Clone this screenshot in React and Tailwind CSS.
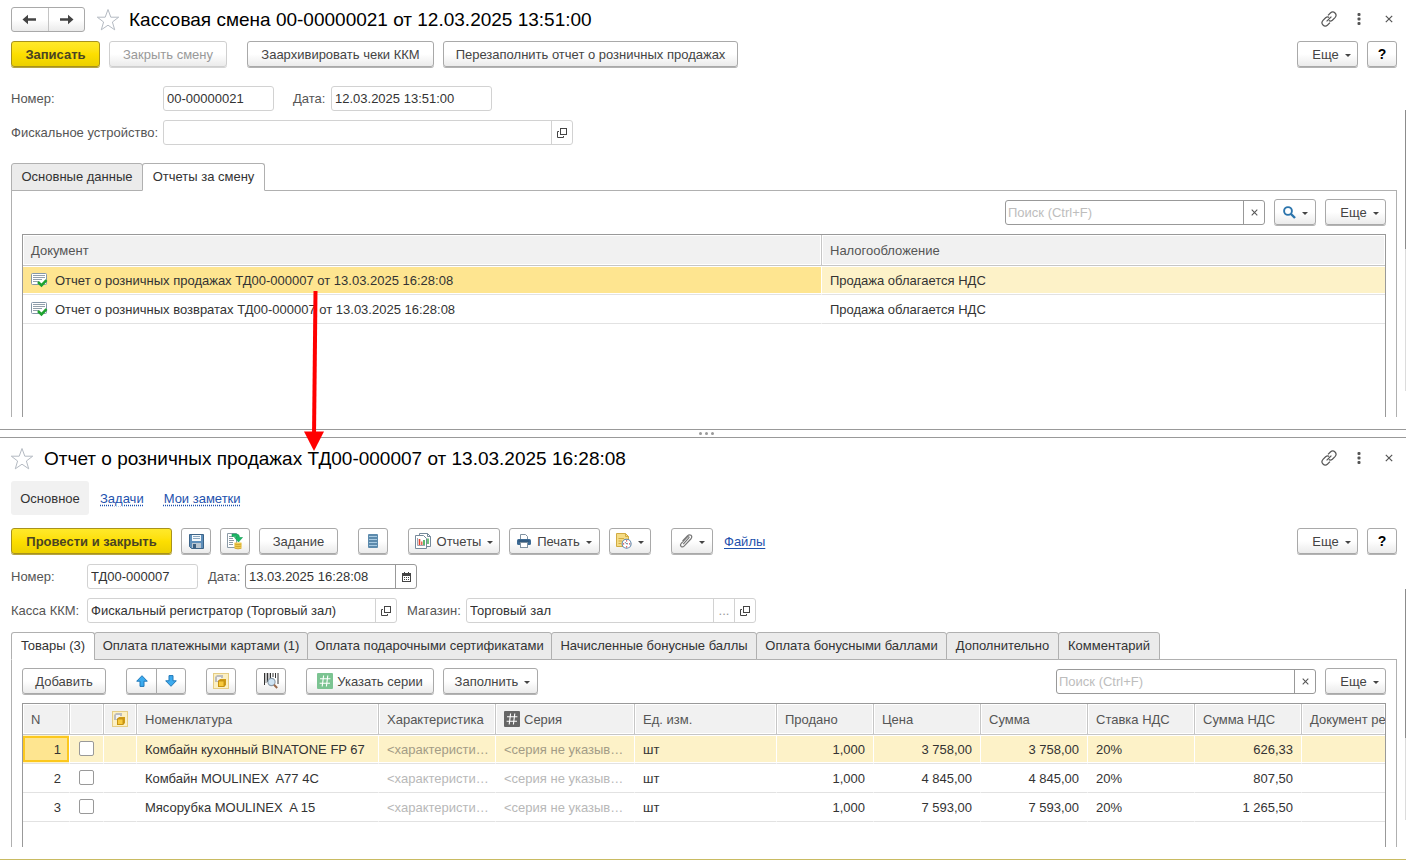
import clsx from "clsx";

/* ---------- icons ---------- */

const ArrowIcon = ({ flip }) => (
  <svg width="15" height="11" viewBox="0 0 15 11" className={clsx(flip && "rotate-180")}>
    <path d="M0.5 5.5L6 0.8V4.2H14V6.8H6V10.2Z" fill="#444" />
  </svg>
);

const StarIcon = () => (
  <svg width="24" height="24" viewBox="0 0 24 24" className="shrink-0">
    <path
      d="M12 1.5L14.8 9.2H22.7L16.4 14L18.7 21.8L12 17.2L5.3 21.8L7.6 14L1.3 9.2H9.2Z"
      fill="#fff"
      stroke="#b4bac2"
      strokeWidth="1"
    />
  </svg>
);

const LinkIcon = () => (
  <svg width="16" height="16" viewBox="0 0 16 16" fill="none" stroke="#555" strokeWidth="1.2">
    <path d="M7 4.4L9.4 2Q11.8 -0.2 14 2Q16.2 4.2 14 6.6L11.4 9.2Q9.6 10.6 7.8 9.6" />
    <path d="M9 11.6L6.6 14Q4.2 16.2 2 14Q-0.2 11.8 2 9.4L4.6 6.8Q6.4 5.4 8.2 6.4" />
    <path d="M5.6 10.4L10.4 5.6" />
  </svg>
);

const DotsIcon = () => (
  <svg width="4" height="12" viewBox="0 0 4 12" fill="#555">
    <rect x="0.5" y="0" width="3" height="3" rx="1" />
    <rect x="0.5" y="4.5" width="3" height="3" rx="1" />
    <rect x="0.5" y="9" width="3" height="3" rx="1" />
  </svg>
);

const CrossIcon = ({ size = 8 }) => (
  <svg width={size} height={size} viewBox="0 0 8 8">
    <path d="M0.8 0.8L7.2 7.2M7.2 0.8L0.8 7.2" stroke="#555" strokeWidth="1.2" />
  </svg>
);

const Caret = () => (
  <svg width="6" height="3" viewBox="0 0 6 3" className="mt-0.5 shrink-0">
    <path d="M0 0H6L3 3Z" fill="#444" />
  </svg>
);

const OpenIcon = () => (
  <svg width="10" height="10" viewBox="0 0 10 10" fill="none" stroke="#444" strokeWidth="1">
    <rect x="3.5" y="0.5" width="6" height="6" />
    <path d="M2 3.5H0.5V9.5H6.5V8" />
  </svg>
);

const CalendarIcon = () => (
  <svg width="9" height="10" viewBox="0 0 9 10">
    <rect x="0.5" y="1.5" width="8" height="8" fill="#fff" stroke="#444" />
    <rect x="0" y="1" width="9" height="3" fill="#444" />
    <path d="M2.5 0V2M6.5 0V2" stroke="#444" />
    <path d="M2 5.5H7.5M2 7.5H7.5" stroke="#444" strokeDasharray="1 1" />
  </svg>
);

const SearchIcon = () => (
  <svg width="13" height="13" viewBox="0 0 13 13" fill="none" stroke="#2b74ac">
    <circle cx="5" cy="5" r="3.9" strokeWidth="1.9" />
    <path d="M8 8L12 12" strokeWidth="2.4" />
  </svg>
);

const DocPostedIcon = () => (
  <svg width="17" height="15" viewBox="0 0 17 15" className="shrink-0">
    <rect x="0.5" y="0.5" width="15" height="11" rx="1" fill="#fff" stroke="#8497a8" />
    <path d="M2 2.5H14M2 4.5H14M2 6.5H11M2 8.5H8" stroke="#93a0ab" />
    <path d="M7 9L10.5 12.5L15.5 7.2" fill="none" stroke="#1fa32f" strokeWidth="2.6" />
  </svg>
);

const SaveIcon = () => (
  <svg width="15" height="15" viewBox="0 0 15 15">
    <path d="M0.5 0.5H14.5V14.5H2.5L0.5 12.5Z" fill="#5e8fbb" stroke="#3d6488" />
    <rect x="3" y="1" width="9" height="6" fill="#f4f8fb" />
    <path d="M4 2.5H11M4 4.5H11" stroke="#8aa7c0" />
    <rect x="3" y="9" width="9" height="5" fill="#b9c6d2" />
    <rect x="4" y="10" width="3" height="4" fill="#3d5f80" />
  </svg>
);

const PostIcon = () => (
  <svg width="16" height="17" viewBox="0 0 16 17">
    <path d="M0.5 0.5H9.5V14.5H0.5Z" fill="#fff" stroke="#8b9aa6" />
    <path d="M2 3.5H6M2 5.5H6M2 7.5H7M2 9.5H6M2 11.5H6" stroke="#8b9aa6" />
    <path d="M5 1H9.5Q12.5 1 12.5 4.5H15.5L11.5 9L7.5 4.5H10Q10 3.5 9 3.5H5Z" fill="#1bb765" stroke="#0f9a50" strokeWidth="0.6" />
    <path d="M7.5 9.5H14.5V15Q11 17 7.5 15Z" fill="#f2cf52" />
    <path d="M7.5 11Q11 12.4 14.5 11M7.5 13Q11 14.4 14.5 13M7.5 15.2Q11 16.6 14.5 15.2" fill="none" stroke="#c99a22" strokeWidth="0.8" />
  </svg>
);

const StackIcon = () => (
  <svg width="10" height="14" viewBox="0 0 10 14">
    <rect x="0" y="0" width="10" height="14" rx="1" fill="#5d8bad" />
    <path d="M1 2.5H9M1 5.5H9M1 8.5H9M1 11.5H9" stroke="#a9cbe2" />
  </svg>
);

const ReportsIcon = () => (
  <svg width="16" height="16" viewBox="0 0 16 16">
    <path d="M4.5 0.5H12.5L15.5 3.5V13.5H4.5Z" fill="#fff" stroke="#75899a" />
    <path d="M12.5 0.5V3.5H15.5" fill="none" stroke="#75899a" />
    <path d="M13 5.5V11" stroke="#35a84a" strokeWidth="1.4" />
    <path d="M0.5 2.5H8.5L11.5 5.5V15.5H0.5Z" fill="#fff" stroke="#75899a" />
    <path d="M2.5 5V12.5H10" fill="none" stroke="#9aa8b4" />
    <path d="M4.5 6V12" stroke="#e2442f" strokeWidth="1.6" />
    <path d="M6.8 8.5V12" stroke="#e2442f" strokeWidth="1.2" />
    <path d="M9 7V12" stroke="#35a84a" strokeWidth="1.6" />
  </svg>
);

const PrintIcon = () => (
  <svg width="14" height="14" viewBox="0 0 14 14">
    <path d="M3.5 5V0.5H8.5L10.5 2.5V5" fill="#fff" stroke="#8091a0" />
    <rect x="0" y="5" width="14" height="6" rx="1.5" fill="#3e6b95" />
    <path d="M1.5 7H12.5" stroke="#274a6b" />
    <rect x="3.5" y="8.5" width="7" height="5" fill="#fff" stroke="#8091a0" />
  </svg>
);

const NoteClockIcon = () => (
  <svg width="16" height="16" viewBox="0 0 16 16">
    <path d="M0.5 0.5H9.5L12.5 3.5V13.5H0.5Z" fill="#f5dc85" stroke="#d1ab43" />
    <path d="M9.5 0.5V3.5H12.5M2.5 5.5H8M2.5 8H6M2.5 10.5H5" fill="none" stroke="#d1ab43" />
    <circle cx="10.6" cy="10.8" r="4.5" fill="#fff" stroke="#5f87ab" strokeWidth="1.1" />
    <path d="M10.6 7.2V8.4M10.6 13.2V14.4M7 10.8H8.2M13 10.8H14.2" stroke="#e04040" strokeWidth="1.2" />
    <path d="M10.6 10.8L9 9.2M10.6 10.8H12" stroke="#3d5f80" strokeWidth="0.9" />
  </svg>
);

const ClipIcon = () => (
  <svg width="14" height="14" viewBox="0 0 14 14" fill="none" stroke="#777" strokeWidth="1.2">
    <path d="M4.2 10.2L9.6 4.2Q10.6 3.2 9.7 2.7Q9 2.2 8.2 3L2.3 9.3Q0.7 11.2 2.2 12.5Q3.6 13.6 5.3 11.9L11.8 5Q13.6 2.8 12 1.3Q10.3 0 8.4 1.9L3.6 7" />
  </svg>
);

const UpIcon = ({ down }) => (
  <svg width="12" height="12" viewBox="0 0 12 12" className={clsx(down && "rotate-180")}>
    <path d="M6 0.7L11.3 6.2H8V11.4H4V6.2H0.7Z" fill="#3cabef" stroke="#2279b8" strokeWidth="1" />
  </svg>
);

const BoxesIcon = () => (
  <svg width="16" height="16" viewBox="0 0 16 16" className="shrink-0">
    <rect x="0.5" y="0.5" width="15" height="15" fill="#fcf0c3" stroke="#e5cd85" />
    <path d="M2 4L4 2H10V5H5V9H2Z" fill="#bdbdbd" />
    <rect x="4" y="4" width="4" height="4" fill="#f3f3f3" />
    <path d="M5 8L7 6H13V12L11 14H5Z" fill="#cf9a16" />
    <rect x="5.5" y="8" width="5.5" height="5.5" fill="#f8ca3d" stroke="#bf8c10" strokeWidth="0.8" />
  </svg>
);

const BarcodeIcon = () => (
  <svg width="15" height="16" viewBox="0 0 15 16">
    <path d="M0.5 0V12M3.5 0V9M6.5 0V5M9 0V4M11.5 0V5M14 0V11" stroke="#333" strokeWidth="1" />
    <path d="M2 0V10M5 0V6" stroke="#333" strokeWidth="0.6" />
    <circle cx="7.5" cy="9" r="3.6" fill="#cfe4f4" stroke="#8a9aa8" strokeWidth="1.1" />
    <path d="M10 11.8L13.2 15" stroke="#9a6a4c" strokeWidth="2" />
  </svg>
);

const HashIcon = ({ className }) => (
  <svg width="16" height="16" viewBox="0 0 16 16" className={clsx("shrink-0", className)}>
    <rect width="16" height="16" rx="1" fill="currentColor" />
    <path d="M6.6 2.5L5.2 13.5M10.8 2.5L9.4 13.5M3 5.8H13.4M2.6 10.2H13" stroke="#fff" strokeWidth="1.1" />
  </svg>
);

/* ---------- controls ---------- */

const Button = ({ children, primary, disabled, caret, className, label }) => (
  <button
    type="button"
    disabled={disabled}
    aria-label={label}
    className={clsx(
      "flex h-[26px] shrink-0 items-center justify-center whitespace-nowrap rounded-[3px] border bg-linear-to-b",
      primary
        ? "border-[#a8921c] from-[#ffe929] via-[#fddf00] to-[#ecd000] font-bold text-[#4a4423] shadow-[0_1px_0_#b5a440]"
        : "from-white from-50% to-[#ebebeb]",
      !primary && !disabled && "border-[#a9a9a9] shadow-[0_1px_0_#b3b3b3]",
      disabled && "border-[#cfcfcf] text-[#999] shadow-[0_1px_0_#d5d5d5]",
      caret ? "gap-1.5" : "gap-1",
      className
    )}
  >
    {children}
    {caret && <Caret />}
  </button>
);

const MoreButton = () => (
  <Button caret className="w-[61px] pl-2 text-[#444]">Еще</Button>
);

const HelpButton = () => (
  <Button className="w-[30px] text-sm font-bold text-black">?</Button>
);

const Label = ({ htmlFor, className, children }) => (
  <label htmlFor={htmlFor} className={clsx("whitespace-nowrap text-[#555]", className)}>
    {children}
  </label>
);

const Field = ({ id, value, width, strong, children }) => (
  <div
    className={clsx(
      "flex h-[25px] items-stretch overflow-hidden rounded-[3px] border bg-white",
      strong ? "divide-x divide-[#999] border-[#999]" : "divide-x divide-[#d2d2d2] border-[#d2d2d2]",
      width
    )}
  >
    <input id={id} defaultValue={value} className="w-0 min-w-0 flex-1 px-[3px] text-[#333] outline-none" />
    {children}
  </div>
);

const FieldButton = ({ label, children }) => (
  <button type="button" aria-label={label} className="box-content flex w-5 shrink-0 items-center justify-center text-[#999]">
    {children}
  </button>
);

const SearchBox = ({ id }) => (
  <div className="flex h-[25px] w-[260px] divide-x divide-[#999] rounded-[3px] border border-[#999] bg-white">
    <input
      id={id}
      aria-label="Поиск"
      placeholder="Поиск (Ctrl+F)"
      className="w-0 min-w-0 flex-1 px-[2px] outline-none placeholder:text-[#bdbdbd]"
    />
    <FieldButton label="Очистить">
      <CrossIcon size={7} />
    </FieldButton>
  </div>
);

const WindowActions = () => (
  <div className="ml-auto flex items-center pb-0.5">
    <button type="button" aria-label="Ссылка" className="mr-[20px]">
      <LinkIcon />
    </button>
    <button type="button" aria-label="Меню" className="mr-[24px]">
      <DotsIcon />
    </button>
    <button type="button" aria-label="Закрыть" className="mr-1">
      <CrossIcon />
    </button>
  </div>
);

const Tabs = ({ items, active }) => (
  <div role="tablist" className="relative -mb-px flex">
    {items.map((tab, i) => (
      <button
        key={tab.title}
        type="button"
        role="tab"
        aria-selected={i === active}
        className={clsx(
          "h-7 whitespace-nowrap rounded-t-[3px] border border-[#b0b0b0] pb-px text-center text-[#333]",
          i > 0 && "-ml-px",
          i === active ? "border-b-white bg-white" : "bg-[#ebebeb]",
          tab.width
        )}
      >
        {tab.title}
      </button>
    ))}
  </div>
);

const Scrollbar = ({ className, thumb, track }) => (
  <div className={clsx("w-px shrink-0", className)}>
    <div className={clsx("bg-[#8c8c8c]", thumb)} />
    <div className={clsx("bg-[#dcdcdc]", track)} />
  </div>
);

const thClass =
  "h-[31px] overflow-hidden whitespace-nowrap border-b border-r border-[#c6c6c6] bg-[#f1f1f1] px-2 text-left font-normal text-[#555] shadow-[inset_0_0_0_1px_#fff] last:border-r-0";
const tdClass =
  "h-[29px] overflow-hidden whitespace-nowrap border-b border-r border-b-[#e2e2e2] border-r-white px-2 shadow-[inset_0_1px_#fff,inset_0_-1px_#fff] last:border-r-0";

/* ---------- data ---------- */

const shiftTabs = [
  { title: "Основные данные", width: "w-[132px]" },
  { title: "Отчеты за смену", width: "w-[123px]" },
];

const reports = [
  { doc: "Отчет о розничных продажах ТД00-000007 от 13.03.2025 16:28:08", tax: "Продажа облагается НДС" },
  { doc: "Отчет о розничных возвратах ТД00-000007 от 13.03.2025 16:28:08", tax: "Продажа облагается НДС" },
];

const reportTabs = [
  { title: "Товары (3)", width: "w-[84px]" },
  { title: "Оплата платежными картами (1)", width: "w-[214px]" },
  { title: "Оплата подарочными сертификатами", width: "w-[245px]" },
  { title: "Начисленные бонусные баллы", width: "w-[206px]" },
  { title: "Оплата бонусными баллами", width: "w-[191px]" },
  { title: "Дополнительно", width: "w-[113px]" },
  { title: "Комментарий", width: "w-[102px]" },
];

const goods = [
  { name: "Комбайн кухонный BINATONE FP 67", price: "3 758,00", sum: "3 758,00", vat: "626,33" },
  { name: "Комбайн MOULINEX  A77 4C", price: "4 845,00", sum: "4 845,00", vat: "807,50" },
  { name: "Мясорубка MOULINEX  A 15", price: "7 593,00", sum: "7 593,00", vat: "1 265,50" },
];

/* ---------- panes ---------- */

const ShiftPane = () => (
  <section className="pt-[7px]">
    <header className="flex h-[25px] items-center pl-[11px] pr-[9px]">
      <div className="flex h-[25px] w-[74px] divide-x divide-[#c4c4c4] rounded-[3px] border border-[#a9a9a9] bg-linear-to-b from-white from-50% to-[#ebebeb]">
        <button type="button" aria-label="Назад" className="flex flex-1 items-center justify-center">
          <ArrowIcon />
        </button>
        <button type="button" aria-label="Вперед" className="flex flex-1 items-center justify-center">
          <ArrowIcon flip />
        </button>
      </div>
      <button type="button" aria-label="В избранное" className="ml-[11px] mr-[9px]">
        <StarIcon />
      </button>
      <h1 className="text-[19px] text-black">Кассовая смена 00-00000021 от 12.03.2025 13:51:00</h1>
      <WindowActions />
    </header>

    <div className="mt-[9px] flex pl-[11px] pr-[9px]">
      <Button primary className="w-[89px]">Записать</Button>
      <Button disabled className="ml-[9px] w-[118px]">Закрыть смену</Button>
      <Button className="ml-5 w-[187px] text-[#444]">Заархивировать чеки ККМ</Button>
      <Button className="ml-[9px] w-[295px] text-[#444]">Перезаполнить отчет о розничных продажах</Button>
      <div className="ml-auto flex gap-[9px]">
        <MoreButton />
        <HelpButton />
      </div>
    </div>

    <div className="flex">
      <div className="min-w-0 flex-1 pl-[11px] pr-2 pt-[19px]">
        <div className="flex items-center">
          <Label htmlFor="shift-number" className="w-[152px]">Номер:</Label>
          <Field id="shift-number" value="00-00000021" width="w-[111px]" />
          <Label htmlFor="shift-date" className="ml-[19px] w-[38px]">Дата:</Label>
          <Field id="shift-date" value="12.03.2025 13:51:00" width="w-[161px]" />
        </div>
        <div className="mt-[9px] flex items-center">
          <Label htmlFor="device" className="w-[152px]">Фискальное устройство:</Label>
          <Field id="device" value="" width="w-[410px]">
            <FieldButton label="Открыть"><OpenIcon /></FieldButton>
          </Field>
        </div>

        <div className="mt-[18px]">
          <Tabs items={shiftTabs} active={1} />
          <div className="border border-b-0 border-[#b0b0b0] px-[10px] pt-2">
            <div className="flex items-center justify-end gap-[9px]">
              <SearchBox id="shift-search" />
              <Button caret label="Найти" className="w-[42px]"><SearchIcon /></Button>
              <MoreButton />
            </div>
            <div className="mt-[9px] min-h-[183px] border border-b-0 border-[#999]">
              <table className="w-full table-fixed border-separate border-spacing-0">
                <thead>
                  <tr>
                    <th className={clsx(thClass, "w-[799px]")}>Документ</th>
                    <th className={thClass}>Налогообложение</th>
                  </tr>
                </thead>
                <tbody>
                  {reports.map((r, i) => (
                    <tr key={r.doc}>
                      <td className={clsx(tdClass, i === 0 && "bg-[#fee590]")}>
                        <div className="flex items-center gap-[7px]">
                          <DocPostedIcon />
                          {r.doc}
                        </div>
                      </td>
                      <td className={clsx(tdClass, i === 0 && "bg-[#fdf2c8]")}>{r.tax}</td>
                    </tr>
                  ))}
                </tbody>
              </table>
            </div>
          </div>
        </div>
      </div>
      <Scrollbar className="mt-[43px]" thumb="h-[139px]" track="h-[142px]" />
    </div>
  </section>
);

const GoodsTable = () => (
  <table className="w-full table-fixed border-separate border-spacing-0">
    <thead>
      <tr>
        <th className={clsx(thClass, "w-[47px]")}>N</th>
        <th className={clsx(thClass, "w-[34px]")} />
        <th className={clsx(thClass, "w-[33px]")}><BoxesIcon /></th>
        <th className={clsx(thClass, "w-[242px]")}>Номенклатура</th>
        <th className={clsx(thClass, "w-[117px]")}>Характеристика</th>
        <th className={clsx(thClass, "w-[139px]")}>
          <div className="flex items-center gap-1">
            <HashIcon className="text-[#666]" />
            Серия
          </div>
        </th>
        <th className={clsx(thClass, "w-[142px]")}>Ед. изм.</th>
        <th className={clsx(thClass, "w-[97px]")}>Продано</th>
        <th className={clsx(thClass, "w-[107px]")}>Цена</th>
        <th className={clsx(thClass, "w-[107px]")}>Сумма</th>
        <th className={clsx(thClass, "w-[107px]")}>Ставка НДС</th>
        <th className={clsx(thClass, "w-[107px]")}>Сумма НДС</th>
        <th className={thClass}>Документ ре</th>
      </tr>
    </thead>
    <tbody>
      {goods.map((g, i) => {
        const hint = i === 0 ? "text-[#a39c86]" : "text-[#b8b8b8]";
        return (
          <tr key={g.name} className={clsx(i === 0 && "bg-[#fdf2c8]")}>
            {i === 0 ? (
              <td className="h-[29px] border-b border-r border-b-[#e2e2e2] border-r-white py-px">
                <div className="flex h-[26px] items-center justify-end border-2 border-[#fcc81e] bg-[#fee590] pr-[6px]">1</div>
              </td>
            ) : (
              <td className={clsx(tdClass, "text-right")}>{i + 1}</td>
            )}
            <td className={clsx(tdClass, "pb-0.5")}>
              <input
                type="checkbox"
                aria-label={g.name}
                className="ml-px block size-[15px] appearance-none rounded-[2px] border border-[#999] bg-white"
              />
            </td>
            <td className={tdClass} />
            <td className={clsx(tdClass, "whitespace-pre")}>{g.name}</td>
            <td className={clsx(tdClass, hint)}>&lt;характеристи…</td>
            <td className={clsx(tdClass, hint)}>&lt;серия не указыв…</td>
            <td className={tdClass}>шт</td>
            <td className={clsx(tdClass, "text-right")}>1,000</td>
            <td className={clsx(tdClass, "text-right")}>{g.price}</td>
            <td className={clsx(tdClass, "text-right")}>{g.sum}</td>
            <td className={tdClass}>20%</td>
            <td className={clsx(tdClass, "text-right")}>{g.vat}</td>
            <td className={tdClass} />
          </tr>
        );
      })}
    </tbody>
  </table>
);

const ReportPane = () => (
  <section className="flex flex-1 flex-col pb-3 pt-[8px]">
    <header className="flex h-[25px] items-center pl-[10px] pr-[9px]">
      <button type="button" aria-label="В избранное" className="mr-[10px]">
        <StarIcon />
      </button>
      <h2 className="text-[19px] text-black">Отчет о розничных продажах ТД00-000007 от 13.03.2025 16:28:08</h2>
      <WindowActions />
    </header>

    <nav className="mt-[10px] flex h-[34px] items-center gap-5 pl-[11px]">
      <a href="#main" className="-mr-[9px] flex h-full w-[78px] items-center justify-center rounded-[3px] bg-[#f1f1f1]">
        Основное
      </a>
      <a href="#tasks" className="text-[#1d51ad] underline decoration-dotted underline-offset-2">Задачи</a>
      <a href="#notes" className="text-[#1d51ad] underline decoration-dotted underline-offset-2">Мои заметки</a>
    </nav>

    <div className="mt-[13px] flex items-center pl-[11px] pr-[9px]">
      <Button primary className="w-[161px]">Провести и закрыть</Button>
      <Button label="Записать" className="ml-[9px] w-[30px]"><SaveIcon /></Button>
      <Button label="Провести" className="ml-[9px] w-[30px]"><PostIcon /></Button>
      <Button className="ml-[9px] w-[79px] text-[#444]">Задание</Button>
      <Button label="Движения документа" className="ml-5 w-[30px]"><StackIcon /></Button>
      <Button caret className="ml-5 w-[92px] text-[#444]"><ReportsIcon />Отчеты</Button>
      <Button caret className="ml-[9px] w-[91px] text-[#444]"><PrintIcon />Печать</Button>
      <Button caret label="Напоминание" className="ml-[9px] w-[42px]"><NoteClockIcon /></Button>
      <Button caret label="Вложения" className="ml-5 w-[42px]"><ClipIcon /></Button>
      <a href="#files" className="ml-[11px] text-[#1d51ad] underline underline-offset-2">Файлы</a>
      <div className="ml-auto flex gap-[9px]">
        <MoreButton />
        <HelpButton />
      </div>
    </div>

    <div className="flex flex-1">
      <div className="flex min-w-0 flex-1 flex-col pl-[11px] pr-2 pt-[10px]">
        <div className="flex items-center">
          <Label htmlFor="report-number" className="w-[76px]">Номер:</Label>
          <Field id="report-number" value="ТД00-000007" width="w-[111px]" />
          <Label htmlFor="report-date" className="ml-[10px] w-[37px]">Дата:</Label>
          <Field id="report-date" value="13.03.2025 16:28:08" width="w-[172px]" strong>
            <FieldButton label="Выбрать дату"><CalendarIcon /></FieldButton>
          </Field>
        </div>
        <div className="mt-[9px] flex items-center">
          <Label htmlFor="cashbox" className="w-[76px]">Касса ККМ:</Label>
          <Field id="cashbox" value="Фискальный регистратор (Торговый зал)" width="w-[310px]">
            <FieldButton label="Открыть"><OpenIcon /></FieldButton>
          </Field>
          <Label htmlFor="store" className="ml-[10px] w-[59px]">Магазин:</Label>
          <Field id="store" value="Торговый зал" width="w-[290px]">
            <FieldButton label="Выбрать">...</FieldButton>
            <FieldButton label="Открыть"><OpenIcon /></FieldButton>
          </Field>
        </div>

        <div className="mt-[9px] flex flex-1 flex-col">
          <Tabs items={reportTabs} active={0} />
          <div className="flex flex-1 flex-col border border-b-0 border-[#b0b0b0] px-[10px] pt-2">
            <div className="flex items-center">
              <Button className="w-[84px] text-[#444]">Добавить</Button>
              <div className="ml-5 flex">
                <Button label="Вверх" className="w-[31px] rounded-r-none"><UpIcon /></Button>
                <Button label="Вниз" className="-ml-px w-[30px] rounded-l-none"><UpIcon down /></Button>
              </div>
              <Button label="Упаковки" className="ml-5 w-[30px]"><BoxesIcon /></Button>
              <Button label="Поиск по штрихкоду" className="ml-5 w-[30px]"><BarcodeIcon /></Button>
              <Button className="ml-5 w-[128px] text-[#444]">
                <HashIcon className="text-[#7cc492]" />
                Указать серии
              </Button>
              <Button caret className="ml-[9px] w-[95px] pl-1 text-[#444]">Заполнить</Button>
              <div className="ml-auto flex items-center gap-[9px]">
                <SearchBox id="goods-search" />
                <MoreButton />
              </div>
            </div>
            <div className="mt-[9px] min-h-[144px] flex-1 border border-b-0 border-[#999]">
              <GoodsTable />
            </div>
          </div>
        </div>
      </div>
      <Scrollbar className="mt-[35px]" thumb="h-[149px]" track="h-[82px]" />
    </div>
  </section>
);

export default function App() {
  return (
    <div className="relative flex min-h-screen flex-col border-b border-[#c9bb62] bg-white font-['Liberation_Sans',Arial,sans-serif] text-[13px] leading-[17px] text-[#333]">
      <ShiftPane />

      {/* splitter */}
      <div className="mt-3 flex h-[9px] items-center justify-center gap-[3px] border-y border-[#999] pl-1.5">
        <span className="size-[3px] rounded-full bg-[#999]" />
        <span className="size-[3px] rounded-full bg-[#999]" />
        <span className="size-[3px] rounded-full bg-[#999]" />
      </div>

      <ReportPane />

      {/* callout arrow from the selected row to the opened document */}
      <svg
        width="24"
        height="164"
        viewBox="0 0 24 164"
        className="pointer-events-none absolute left-[302px] top-[290px]"
      >
        <path d="M13.5 1L12 146" stroke="#f00" strokeWidth="4" />
        <path d="M2 141.5H22L12 161Z" fill="#f00" />
      </svg>
    </div>
  );
}
